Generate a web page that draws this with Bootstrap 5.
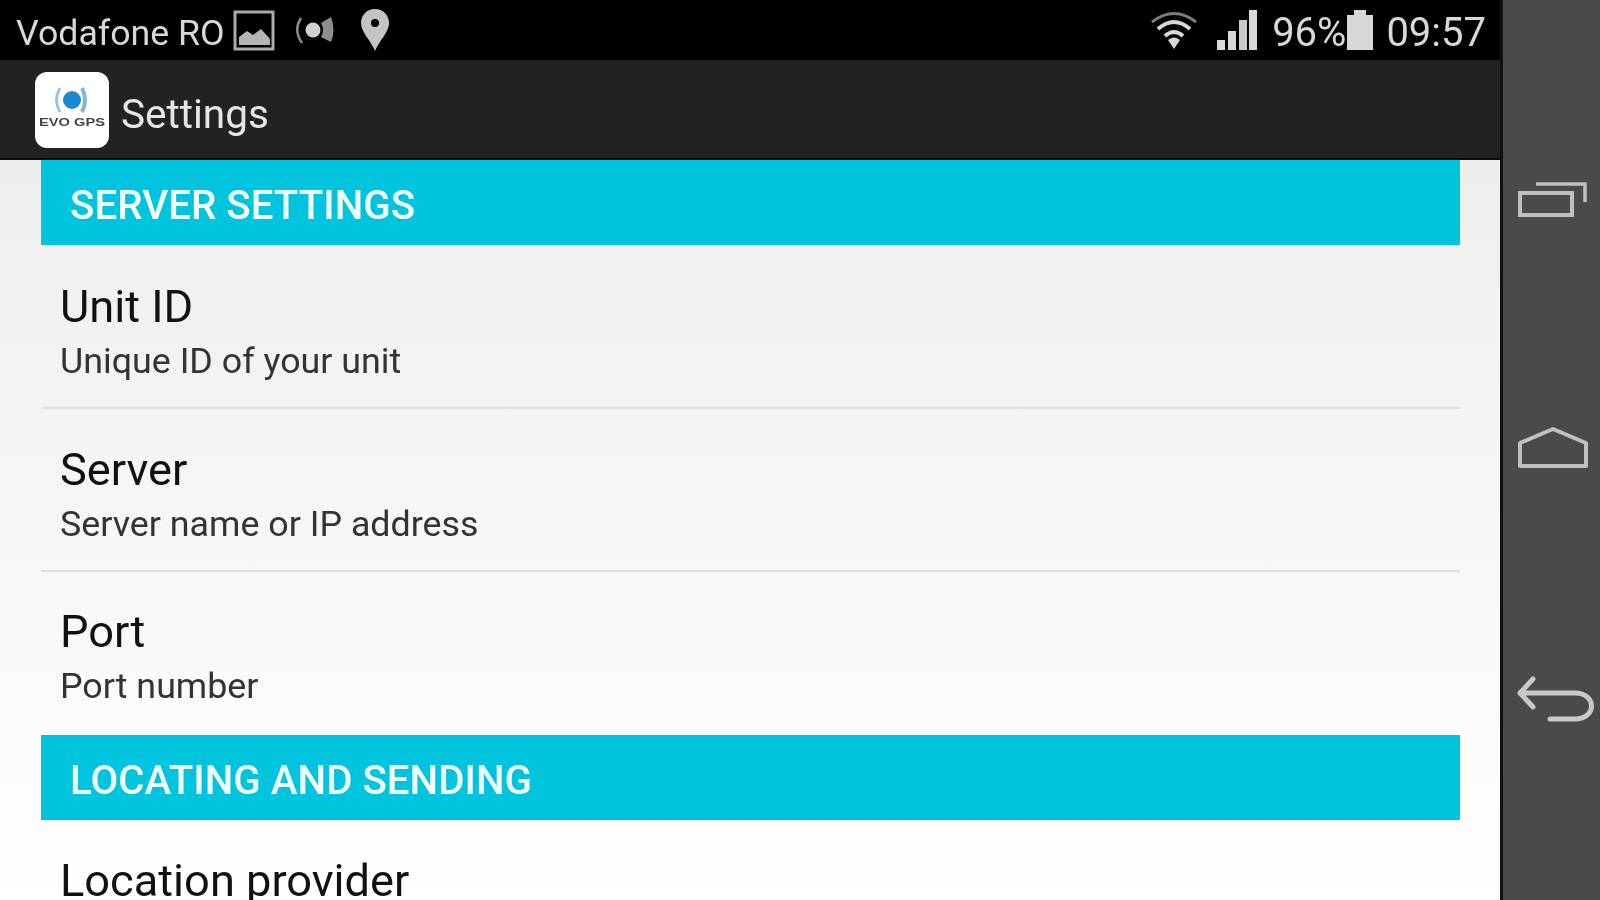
<!DOCTYPE html>
<html lang="en">

<head>
    <meta charset="UTF-8">
    <meta name="viewport" content="width=device-width, initial-scale=1.0">
    <title>Settings</title>
    <link href="https://cdn.jsdelivr.net/npm/bootstrap@5.3.0/dist/css/bootstrap.min.css" rel="stylesheet">
    <style>
        html, body {
            height: 900px;
            overflow: hidden;
            background-color: #000;
        }

        body {
            font-family: Roboto, "Liberation Sans", sans-serif;
        }

        /* the reference is an upscaled shot, so text and icons are soft */
        .status-bar > *,
        .app-bar > *,
        .band span,
        .pref-title,
        .pref-sub,
        .nav-side svg {
            filter: blur(0.7px);
        }

        .phone-main {
            width: 1500px;
            height: 900px;
        }

        .status-bar {
            height: 60px;
            padding: 0 14px 0 16px;
            background-color: #000;
            color: #d8d8d8;
            font-size: 35.7px;
            line-height: 60px;
        }

        .status-left {
            padding-top: 6px;
        }

        .status-right {
            font-size: 40px;
            padding-top: 6px;
        }

        .pin-icon {
            margin-left: 23px;
        }

        .signal-icon {
            margin-left: 18px;
        }

        .percent-text {
            margin-left: 14px;
        }

        .clock-text {
            margin-left: 12px;
        }

        .app-bar {
            height: 100px;
            padding-left: 34px;
            background-color: #222;
            border-bottom: 2px solid #0c0c0c;
            color: #e6e6e6;
            font-size: 40.5px;
        }

        .app-title {
            padding-top: 10px;
        }

        .app-logo {
            width: 74px;
            height: 76px;
            margin: 2px 12px 0 1px;
            border-radius: 12px;
            background-color: #fff;
        }

        .settings-pane {
            height: 740px;
            padding: 0 40px 0 41px;
            background: linear-gradient(#eeeeee, #ffffff);
        }

        .band {
            height: 85px;
            padding-left: 29px;
            background-color: #00c3de;
            color: #f2fdfd;
            font-size: 40.3px;
            font-weight: 500;
            line-height: 92px;
        }

        .pref-row {
            height: 163px;
            padding: 34px 19px 0;
            border-bottom: 2px solid #dedede;
        }

        .pref-row.first-row {
            height: 164px;
            padding-top: 35px;
        }

        .pref-row.last-row {
            border-bottom: 0;
        }

        .pref-row.port-row {
            padding-top: 33px;
        }

        .pref-title {
            color: #111;
            font-size: 45.2px;
            line-height: 54px;
        }

        .pref-sub {
            color: #333;
            font-size: 35.8px;
            line-height: 46px;
            margin-top: 4px;
        }

        .nav-side {
            width: 100px;
            height: 900px;
            background-color: #4a4a4a;
            border-left: 3px solid #111;
        }

        .nav-side svg {
            display: block;
        }

        .recent-icon {
            margin-top: 179px;
            margin-left: 2px;
        }

        .home-icon {
            margin-top: 208px;
            margin-left: 2px;
        }

        .back-icon {
            margin-top: 207px;
            margin-left: 6px;
        }
    </style>
</head>

<body>
    <div class="d-flex">
        <div class="phone-main">
            <div class="status-bar d-flex align-items-center">
                <span class="status-left">Vodafone RO</span>
                <svg class="ms-2" width="44" height="42" viewBox="0 0 44 42">
                    <rect x="2" y="3" width="38" height="37" fill="none" stroke="#aaa" stroke-width="3" />
                    <path d="M6 36 V28 L14 22 L20 26 L28 20 L37 30 V36 Z" fill="#b4b4b4" />
                </svg>
                <svg class="ms-3" width="44" height="36" viewBox="0 0 44 36">
                    <path d="M8 6 Q0 18 9 31" fill="none" stroke="#8a8a8a" stroke-width="2.5" />
                    <circle cx="20" cy="18" r="7.5" fill="#d0d0d0" />
                    <path d="M28 11 L38 5 Q43 18 38 30 L28 25 Q32 18 28 11 Z" fill="#8e8e8e" />
                </svg>
                <svg class="pin-icon" width="30" height="44" viewBox="0 0 30 44">
                    <path fill-rule="evenodd" d="M15 1 C6 1 1 8 1 15 C1 24 11 33 15 43 C19 33 29 24 29 15 C29 8 24 1 15 1 Z M15 11 A4 4 0 1 1 15 19 A4 4 0 1 1 15 11 Z" fill="#c4c4c4" />
                </svg>
                <svg class="ms-auto" width="48" height="42" viewBox="0 0 48 42">
                    <path d="M2 13 Q24 -4 46 13" fill="none" stroke="#7c7c7c" stroke-width="3" />
                    <path d="M8 20 Q24 6 40 20" fill="none" stroke="#d8d8d8" stroke-width="4" />
                    <path d="M15 27 Q24 19 33 27" fill="none" stroke="#d8d8d8" stroke-width="4" />
                    <path d="M18 31 Q24 26 30 31 L24 40 Z" fill="#d8d8d8" />
                </svg>
                <svg class="signal-icon" width="42" height="42" viewBox="0 0 42 42">
                    <rect x="1" y="31" width="8" height="10" fill="#d8d8d8" />
                    <rect x="12" y="22" width="8" height="19" fill="#d8d8d8" />
                    <rect x="23" y="11" width="8" height="30" fill="#c8c8c8" />
                    <rect x="33" y="1" width="8" height="40" fill="#d8d8d8" />
                </svg>
                <span class="status-right percent-text">96%</span>
                <svg width="28" height="42" viewBox="0 0 28 42">
                    <path d="M1 6 H8 V1 H20 V6 H27 V41 H1 Z" fill="#d8d8d8" />
                </svg>
                <span class="status-right clock-text">09:57</span>
            </div>

            <div class="app-bar d-flex align-items-center">
                <div class="app-logo d-flex align-items-center justify-content-center">
                    <svg width="72" height="60" viewBox="0 0 72 60">
                        <path d="M24 8 Q17 20 24 32" fill="none" stroke="#9cc3d8" stroke-width="3" />
                        <circle cx="36" cy="20" r="9" fill="#1f88cc" />
                        <path d="M46 8 Q52 20 46 32" fill="none" stroke="#7fb6d2" stroke-width="4" />
                        <text x="36" y="46" text-anchor="middle" font-family="Liberation Sans, sans-serif" font-size="11" font-weight="700" fill="#444" textLength="66" lengthAdjust="spacingAndGlyphs">EVO GPS</text>
                    </svg>
                </div>
                <span class="app-title">Settings</span>
            </div>

            <div class="settings-pane overflow-hidden">
                <div class="band"><span>SERVER SETTINGS</span></div>
                <div class="pref-row first-row">
                    <div class="pref-title">Unit ID</div>
                    <div class="pref-sub">Unique ID of your unit</div>
                </div>
                <div class="pref-row">
                    <div class="pref-title">Server</div>
                    <div class="pref-sub">Server name or IP address</div>
                </div>
                <div class="pref-row last-row port-row">
                    <div class="pref-title">Port</div>
                    <div class="pref-sub">Port number</div>
                </div>
                <div class="band"><span>LOCATING AND SENDING</span></div>
                <div class="pref-row last-row">
                    <div class="pref-title">Location provider</div>
                </div>
            </div>
        </div>

        <div class="nav-side d-flex flex-column align-items-center">
            <svg class="recent-icon" width="72" height="40" viewBox="0 0 72 40">
                <rect x="3" y="14" width="52" height="22" fill="none" stroke="#c0c0c0" stroke-width="4" />
                <path d="M19 5 H68 V23" fill="none" stroke="#c0c0c0" stroke-width="3.5" />
            </svg>
            <svg class="home-icon" width="72" height="42" viewBox="0 0 72 42">
                <path d="M3 16 L36 2 L69 16 V39 H3 Z" fill="none" stroke="#c0c0c0" stroke-width="4" stroke-linejoin="round" />
            </svg>
            <svg class="back-icon" width="84" height="48" viewBox="0 0 84 48">
                <path d="M20 3 L7 17 L20 31 M7 17 H62 C84 17 84 43 62 43 H37" fill="none" stroke="#c8c8c8" stroke-width="5" stroke-linecap="round" stroke-linejoin="round" />
            </svg>
        </div>
    </div>

    <script src="https://cdn.jsdelivr.net/npm/bootstrap@5.3.0/dist/js/bootstrap.bundle.min.js"></script>
</body>

</html>
